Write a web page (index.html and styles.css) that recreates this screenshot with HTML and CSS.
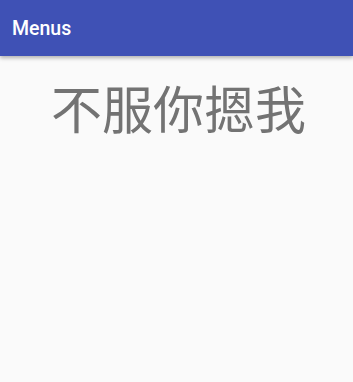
FILE: index.html
```html
<!DOCTYPE html>
<html>
<head>
<meta charset="utf-8">
<link rel="stylesheet" href="styles.css">
</head>
<body>
<header class="appbar"><span class="title">Menus</span></header>
<main class="content"><p class="big">不服你摁我</p></main>
</body>
</html>
```
FILE: styles.css
```css
html, body { margin: 0; padding: 0; }
body { width: 353px; height: 382px; background: #fafafa; font-family: Roboto, "Noto Sans", sans-serif; overflow: hidden; }
.appbar { height: 56px; background: #3f51b5; display: flex; align-items: center; padding-left: 12px; box-shadow: 0 2px 4px rgba(0,0,0,0.3); position: relative; }
.title { color: #fff; font-size: 19.5px; font-weight: 500; }
.content { display: flex; justify-content: center; padding-left: 4px; }
.big { margin: 19px 0 0; font-family: "Noto Sans CJK SC", sans-serif; font-size: 51px; line-height: 64px; color: #737373; }
```
